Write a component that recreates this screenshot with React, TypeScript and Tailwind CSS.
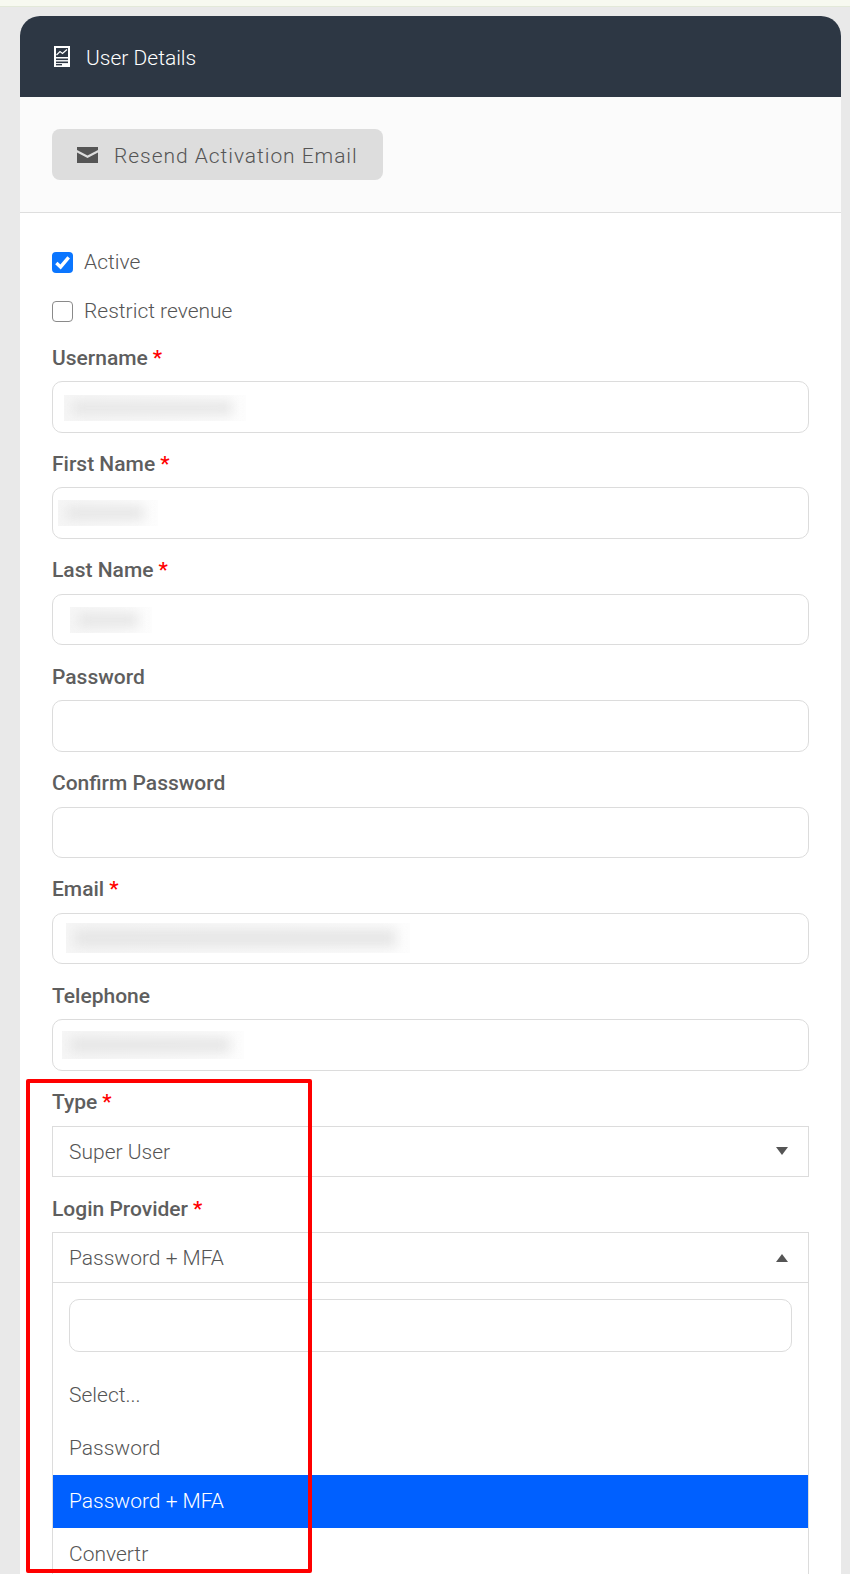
const FONT = "font-['Roboto',sans-serif]";

function Req() {
  return <span className="text-[#ff0000] ml-[5px]">*</span>;
}

function Label({ text, req }: { text: string; req?: boolean }) {
  return (
    <div className="h-[26px] mb-[10px] flex items-center text-[21px] font-medium text-[#5e5e5e] leading-none">
      <span>{text}</span>
      {req && <Req />}
    </div>
  );
}

function Blur({ left, width, height, top = 0 }: { left: number; width: number; height: number; top?: number }) {
  return (
    <div
      className="overflow-hidden bg-linear-to-r from-[#f6f6f6] to-[#fdfdfd]"
      style={{ marginLeft: left, width, height, marginTop: top }}
    >
      <div className="w-full h-full pl-[8px] pr-[14px] py-[6px]">
        <div className="w-full h-full bg-[#e6e6e6] blur-[6px]" />
      </div>
    </div>
  );
}

function Field({ label, req, blur }: { label: string; req?: boolean; blur?: { left: number; width: number; height: number; top?: number } }) {
  return (
    <div className="mb-[18.9px]">
      <Label text={label} req={req} />
      <div className="h-[51.5px] rounded-[10px] border border-[#dcdcdc] bg-white flex items-center">
        {blur && <Blur {...blur} />}
      </div>
    </div>
  );
}

function Check({ checked, label, className }: { checked?: boolean; label: string; className?: string }) {
  return (
    <div className={`flex items-center h-[21px] ${className ?? ""}`}>
      {checked ? (
        <div className="w-[21px] h-[21px] rounded-[4px] bg-[#0b76ff] flex items-center justify-center">
          <svg width="17" height="17" viewBox="0 0 16 16" fill="none">
            <path d="M2.2 8.5 L6.2 12.2 L13.8 3.2" stroke="#ffffff" strokeWidth="3.2" />
          </svg>
        </div>
      ) : (
        <div className="w-[21px] h-[21px] rounded-[4px] border-[1.5px] border-[#8a8a8a] bg-white" />
      )}
      <span className="ml-[11px] text-[21px] font-light text-[#555555] leading-none">{label}</span>
    </div>
  );
}

function Caret({ up }: { up?: boolean }) {
  return (
    <svg width="12" height="8" viewBox="0 0 12 8" className="mr-[20px]">
      <path d={up ? "M6 0 L12 8 L0 8 Z" : "M0 0 L12 0 L6 8 Z"} fill="#555555" />
    </svg>
  );
}

function DocIcon() {
  return (
    <svg width="16" height="21" viewBox="0 0 16 21">
      <rect x="0" y="0" width="16" height="21" fill="#ffffff" />
      <rect x="2" y="2" width="12" height="9" fill="#2d3744" />
      <path d="M2.5 9 L6 5.5 L8.5 7.5 L13 3.5" stroke="#ffffff" strokeWidth="1.2" fill="none" />
      <rect x="2" y="12.5" width="12" height="1.6" fill="#2d3744" />
      <rect x="2" y="15.5" width="12" height="1.6" fill="#2d3744" />
      <rect x="2" y="18" width="6" height="1.4" fill="#2d3744" />
    </svg>
  );
}

function MailIcon() {
  return (
    <svg width="21" height="16" viewBox="0 0 21 16">
      <path d="M0 0 H21 V3 L10.5 8.5 L0 3 Z" fill="#555555" />
      <path d="M0 5.5 L10.5 11 L21 5.5 V16 H0 Z" fill="#555555" />
    </svg>
  );
}

function Option({ text, active }: { text: string; active?: boolean }) {
  return (
    <div
      className={`h-[53px] shrink-0 flex items-center pl-[16px] text-[21px] font-light leading-none ${
        active ? "bg-[#0060ff] text-white" : "text-[#555555]"
      }`}
    >
      {text}
    </div>
  );
}

export default function App() {
  return (
    <div className={`${FONT} relative h-[1574px] w-[850px] overflow-hidden bg-[#e9e9e9]`}>
      <div className="h-[7px] bg-[#f7f9f0] border-b border-[#e3e9d9]" />
      <div className="ml-[20px] mt-[9px] w-[821px] h-[1558px] bg-white rounded-t-[20px] overflow-hidden">
        <div className="h-[81px] bg-[#2d3744] flex items-center pl-[34px] text-white">
          <div className="mt-[-1px]"><DocIcon /></div>
          <span className="ml-[16px] mt-[4px] text-[21px] font-light leading-none">User Details</span>
        </div>
        <div className="h-[116px] bg-[#fbfbfb] border-b border-[#dedede] pt-[32px] pl-[32px]">
          <div className="w-[331px] h-[51px] rounded-[8px] bg-[#dddddd] flex items-center pl-[25px]">
            <MailIcon />
            <span className="ml-[16px] mt-[4px] text-[21px] font-light tracking-[0.95px] text-[#555555] leading-none">
              Resend Activation Email
            </span>
          </div>
        </div>
        <div className="px-[32px] pt-[39px]">
          <Check checked label="Active" className="mb-[28px]" />
          <Check label="Restrict revenue" className="mb-[23px]" />
          <Field label="Username" req blur={{ left: 11, width: 182, height: 26, top: 2 }} />
          <Field label="First Name" req blur={{ left: 5, width: 100, height: 26, top: -1 }} />
          <Field label="Last Name" req blur={{ left: 17, width: 82, height: 26, top: 0 }} />
          <Field label="Password" />
          <Field label="Confirm Password" />
          <Field label="Email" req blur={{ left: 13, width: 344, height: 30, top: -1 }} />
          <Field label="Telephone" blur={{ left: 9, width: 182, height: 28, top: 0 }} />
          <div className="mb-[18.9px]">
            <Label text="Type" req />
            <div className="h-[51.5px] border border-[#dcdcdc] bg-white flex items-center justify-between pl-[16px] text-[21px] font-light text-[#555555] leading-none">
              <span className="pt-[3px]">Super User</span>
              <Caret />
            </div>
          </div>
          <div>
            <Label text="Login Provider" req />
            <div className="h-[51px] border border-[#dcdcdc] bg-white flex items-center justify-between pl-[16px] text-[21px] font-light text-[#555555] leading-none">
              <span className="pt-[1px]">Password + MFA</span>
              <Caret up />
            </div>
            <div className="border-x border-[#dcdcdc] h-[300px] flex flex-col">
              <div className="shrink-0 px-[16px] pt-[16px] pb-[17px]">
                <div className="h-[53px] rounded-[10px] border border-[#dcdcdc] bg-white" />
              </div>
              <Option text="Select..." />
              <Option text="Password" />
              <Option text="Password + MFA" active />
              <Option text="Convertr" />
            </div>
          </div>
        </div>
      </div>
      <div className="absolute left-[26px] top-[1079px] w-[286px] h-[494px] border-[4px] border-[#ff0000] rounded-[2px]" />
    </div>
  );
}
